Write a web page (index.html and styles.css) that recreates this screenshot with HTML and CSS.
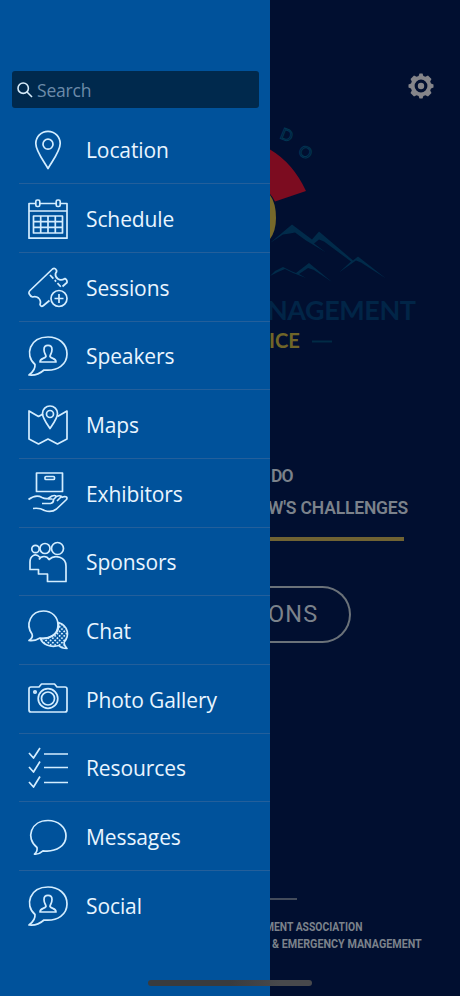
FILE: index.html
```html
<!DOCTYPE html>
<html lang="en">
<head>
<meta charset="utf-8">
<title>Event Menu</title>
<link rel="stylesheet" href="styles.css">
</head>
<body>
<div class="app">
  <nav class="drawer">
    <label class="search">
      <svg class="search-icon" viewBox="0 0 16 16"><circle cx="6.200" cy="6.200" r="5.200"/><path d="M10 10l5 5"/></svg>
      <span>Search</span>
    </label>
    <ul class="menu">
      <li><svg class="icon" viewBox="0 0 40 40"><path d="M20 38.500C15 30 7.800 21 7.800 13.500a12.200 12.200 0 0 1 24.400 0C32.200 21 25 30 20 38.500z"/><circle cx="20" cy="14.200" r="5"/></svg><span>Location</span></li>
      <li><svg class="icon" viewBox="0 0 40 40"><path d="M7.500 4.500H1v34.700h38V4.500h-6.500M12 4.500h16M1 12h38"/><rect x="7.800" y="1" width="4" height="6.500" rx="1.500"/><rect x="28.200" y="1" width="4" height="6.500" rx="1.500"/><path d="M5.500 17h29v17h-29zM5.500 22.700h29M5.500 28.300h29M12.700 17v17M20 17v17M27.300 17v17"/></svg><span>Schedule</span></li>
      <li><svg class="icon" viewBox="0 0 40 40"><path d="M21.500 33.500L15.500 38.500Q13 40.500 12 37.500Q13.500 34 10.500 31Q8 29 4.500 30Q2.500 29.500 1 26.500Q.5 25 2 23.500L24.500 2Q26.500 .5 28 2.500Q29.500 4 27.500 6.500Q27 10 30 12Q33 14 37 11.500Q39.500 13 39 15.500L34.500 19.500"/><path d="M22 8l11 12" stroke-dasharray="5 2 2 2"/><circle cx="31" cy="31.500" r="8"/><path d="M31 27v9M26.500 31.500h9"/></svg><span>Sessions</span></li>
      <li><svg class="icon" viewBox="0 0 40 40"><path d="M7 28.500C-4 19 2 1 20 1c11 0 19 7 19 17S30 35.500 16 34C11 38.500 5 39.500 1 39c4-3 6.500-6 6-10.500z"/><path d="M12 26c0-4 4.500-3 6-5.500 0-2-2-3-2-7 0-5.500 8-5.500 8 0 0 4-2 5-2 7 1.500 2.500 6 1.500 6 5.500z"/></svg><span>Speakers</span></li>
      <li><svg class="icon" viewBox="0 0 40 40"><path d="M15 9l-4.500 2.500L1 6v28l9.500 5L20 34l9.500 5 9.500-5V6l-9.500 5.500"/><path d="M22 23.500C18 17.500 14.500 13 14.500 8.500a7.500 7.500 0 0 1 15 0C29.500 13 26 17.500 22 23.500z"/><circle cx="22" cy="9" r="3.500"/></svg><span>Maps</span></li>
      <li><svg class="icon" viewBox="0 0 40 40"><path d="M8.500 0h26v18.500h-26z"/><rect x="17" y="3.500" width="9.500" height="3" rx="1"/><path d="M.5 26.500Q8 21 14 24.500q3 1.500 6 1l4-2.500q2.500-1 4 0M14 30.500h8.500q3-.5 3-3.500M20 26h4.500M25 27l3.500-3.500q3-1.500 5 0L29 28M33.500 24.500l3-1q3.500 0 2 3L28.500 36q-5 4-12 1.500-5-3-11.500-2"/></svg><span>Exhibitors</span></li>
      <li><svg class="icon" viewBox="0 0 40 40"><circle cx="7.500" cy="7" r="3.700"/><circle cx="17" cy="6.500" r="5"/><circle cx="29.500" cy="6.500" r="6"/><path d="M12 15.500C7 10 2 14.500 2 20v7.500h8.500V32h9v7.500H38V24c0-9-11-12-17-6.500-2-4-8-4-10 0"/></svg><span>Sponsors</span></li>
      <li><svg class="icon" viewBox="0 0 40 40"><defs><pattern id="dots" width="3.200" height="3.200" patternUnits="userSpaceOnUse" patternTransform="rotate(45)"><circle class="dot" cx="1.600" cy="1.600" r="1"/></pattern></defs><path class="dotted" d="M30.500 11.500C41 15 41.500 25 36 31.500c0 3 1 4 3 6-3 0-6-.5-8-3C22 37 14 33 12.500 27.500 24 28 32 22 30.500 11.500z"/><path d="M4 23C-3 13 3 0 15.500 0 24 0 30 6 30 14 30 24 21 28.500 12 27c-4 2.500-7.500 3-11 2.500 3-2 4-4 3-6.500z"/></svg><span>Chat</span></li>
      <li><svg class="icon" viewBox="0 0 40 40"><path d="M3 8h8l2.500-3h13L29 8h8q2 0 2 2v21q0 2-2 2H3q-2 0-2-2V10q0-2 2-2z"/><circle cx="20" cy="19.500" r="9.800"/><circle cx="20" cy="19.500" r="6.500"/><circle cx="7" cy="13" r="1.200"/></svg><span>Photo Gallery</span></li>
      <li><svg class="icon" viewBox="0 0 40 40"><path d="M1 5l4.500 5L12 0M1 19l4.500 5L12 13.500M1 34l4.500 5L12 28.500M16 6h24M16 19.500h24M16 34.500h24"/></svg><span>Resources</span></li>
      <li><svg class="icon" viewBox="0 0 40 40"><path d="M9 30.500C-3 21 3 3.500 20 3.500c10 0 18 6.500 18 15.500S29 35.500 15 33.800C12 36.500 9 37.500 6.500 37.200 9 35 9.500 33 9 30.500z"/></svg><span>Messages</span></li>
      <li><svg class="icon" viewBox="0 0 40 40"><path d="M7 28.500C-4 19 2 1 20 1c11 0 19 7 19 17S30 35.500 16 34C11 38.500 5 39.500 1 39c4-3 6.500-6 6-10.500z"/><path d="M12 26c0-4 4.500-3 6-5.500 0-2-2-3-2-7 0-5.500 8-5.500 8 0 0 4-2 5-2 7 1.500 2.500 6 1.500 6 5.500z"/></svg><span>Social</span></li>
    </ul>
  </nav>
  <main class="page">
    <svg class="gear" viewBox="0 0 26 26"><path fill-rule="evenodd" d="M10.600 3L11.500.5h3L15.400 3l2 .8L20 2.500 23.500 6l-1.300 2.600.8 2 2.500.9v3l-2.500.9-.8 2 1.300 2.600-3.500 3.500-2.600-1.300-2 .8-.9 2.500h-3l-.9-2.500-2-.8L6 23.500 2.500 20l1.300-2.600-.8-2L.5 14.500v-3l2.500-.9.800-2L2.500 6 6 2.500l2.600 1.300zM13 6.600a6.400 6.400 0 1 0 0 12.800 6.400 6.400 0 0 0 0-12.800z"/><circle cx="13" cy="13" r="3.200"/></svg>
    <svg class="logo" viewBox="270 110 190 250">
      <g class="arc"><text transform="translate(279 138) rotate(22)">D</text><text transform="translate(297 153) rotate(36)">O</text></g>
      <path class="red" d="M270 149.500Q293 163 306 191L275 201.500Q273 197 270 194z"/>
      <path class="gold" d="M270 195Q276 203 276 218 276 231 270 239z"/>
      <path class="peak" d="M270 243L292 224.500l20 15 7-8 34 29 5-4 28 22-25-16-5-2-17 12 12-11-27-20-5-2-5 4 12 9-20-12-11-8-5 1-7 1zM270 276l5-5 8-4 8 4 5 2 13-10 23 19-18-12-6-2-9 6 7 4-13-5-8-4-7 3z"/>
      <text class="title" x="267" y="320" textLength="149">NAGEMENT</text>
      <text class="sub" x="269" y="348" textLength="31" lengthAdjust="spacingAndGlyphs">ICE</text>
      <path class="dash" d="M312 341.500h20"/>
    </svg>
    <div class="tagline"><p class="line-one">DO</p><p class="line-two">W'S CHALLENGES</p></div>
    <div class="gold-rule"></div>
    <div class="button"><span>ONS</span></div>
    <footer><div class="short-rule"></div><p class="assoc">MENT ASSOCIATION</p><p class="dept">&amp; EMERGENCY MANAGEMENT</p></footer>
  </main>
  <div class="home-indicator"></div>
</div>
</body>
</html>
```
FILE: styles.css
```css
* { box-sizing: border-box; }
body { margin: 0; }
p, ul { margin: 0; padding: 0; }
.app {
  position: relative;
  display: grid;
  grid-template-columns: 270px 190px;
  width: 460px;
  height: 996px;
  overflow: hidden;
  background: #010f30;
}
.drawer {
  padding-top: 71px;
  background: #00529b;
  color: #e9f5ff;
  font-family: "Open Sans", sans-serif;
}
.search {
  display: flex;
  align-items: center;
  gap: 4px;
  width: 247px;
  height: 37px;
  margin: 0 0 7.500px 12px;
  padding-left: 5px;
  border-radius: 3px;
  background: #00294d;
  color: #6c8ba9;
  font-size: 17.500px;
  letter-spacing: -0.200px;
}
.search-icon { width: 16px; height: 16px; fill: none; stroke: #d6ebfa; stroke-width: 1.600; }
.menu { list-style: none; margin-left: 19px; }
.menu li {
  display: flex;
  align-items: center;
  gap: 18px;
  height: 68.680px;
  padding: 1px 0 0 9px;
  border-bottom: 1px solid #235f9b;
  font-size: 21px;
  letter-spacing: -0.100px;
  white-space: nowrap;
}
.menu li:last-child { border-bottom: 0; }
.menu span { padding-top: 1px; }
.icon {
  width: 40px;
  height: 40px;
  overflow: visible;
  fill: none;
  stroke: #d3edff;
  stroke-width: 1.700;
  stroke-linejoin: round;
}
.dot { fill: #d3edff; stroke: none; }
.icon .dotted { fill: url(#dots); }
.page {
  display: flex;
  flex-direction: column;
  overflow: hidden;
  padding-top: 73px;
  color: #7b828b;
  font-family: Roboto, sans-serif;
}
.gear { width: 26px; height: 26px; margin-left: 137.500px; fill: #85858a; }
.logo { width: 190px; height: 250px; margin-top: 11px; }
.arc { fill: none; stroke: #023552; stroke-width: 1; font: 16px Lato, sans-serif; }
.red { fill: #7c0c20; }
.gold { fill: #76682a; }
.peak { fill: #012b4a; }
.title { fill: #012547; font: 700 27px Lato, sans-serif; }
.sub { fill: #706528; font: 700 20px Lato, sans-serif; }
.dash { stroke: #012b45; stroke-width: 2; }
.tagline { margin-top: 101px; font-size: 17.500px; font-weight: 600; line-height: 31.500px; white-space: nowrap; }
.line-one { margin-left: 1px; letter-spacing: -0.900px; }
.line-two { margin-left: -2px; letter-spacing: -0.180px; }
.gold-rule { flex: none; width: 134px; height: 4px; margin-top: 13px; background: #706333; }
.button {
  display: flex;
  flex: none;
  align-items: center;
  width: 81px;
  height: 57px;
  margin-top: 45px;
  padding-bottom: 2px;
  border: 2px solid #6b7279;
  border-left: 0;
  border-radius: 0 29px 29px 0;
  font-size: 23.500px;
  letter-spacing: 1.200px;
}
.button span { margin-left: -2px; }
footer { margin-top: 255px; font-weight: 700; font-size: 12px; line-height: 17px; white-space: nowrap; }
.short-rule { width: 27px; height: 2px; margin-bottom: 19px; background: #444c5b; }
.assoc, .dept { transform: scaleX(.86); transform-origin: left; }
.assoc { margin-left: -5px; }
.dept { margin-left: 2px; transform: scaleX(.895); }
.home-indicator {
  position: absolute;
  left: 148px;
  bottom: 10px;
  width: 164px;
  height: 6px;
  border-radius: 3px;
  background: linear-gradient(90deg, #393b3e 50%, #48494c 80%);
}
```
